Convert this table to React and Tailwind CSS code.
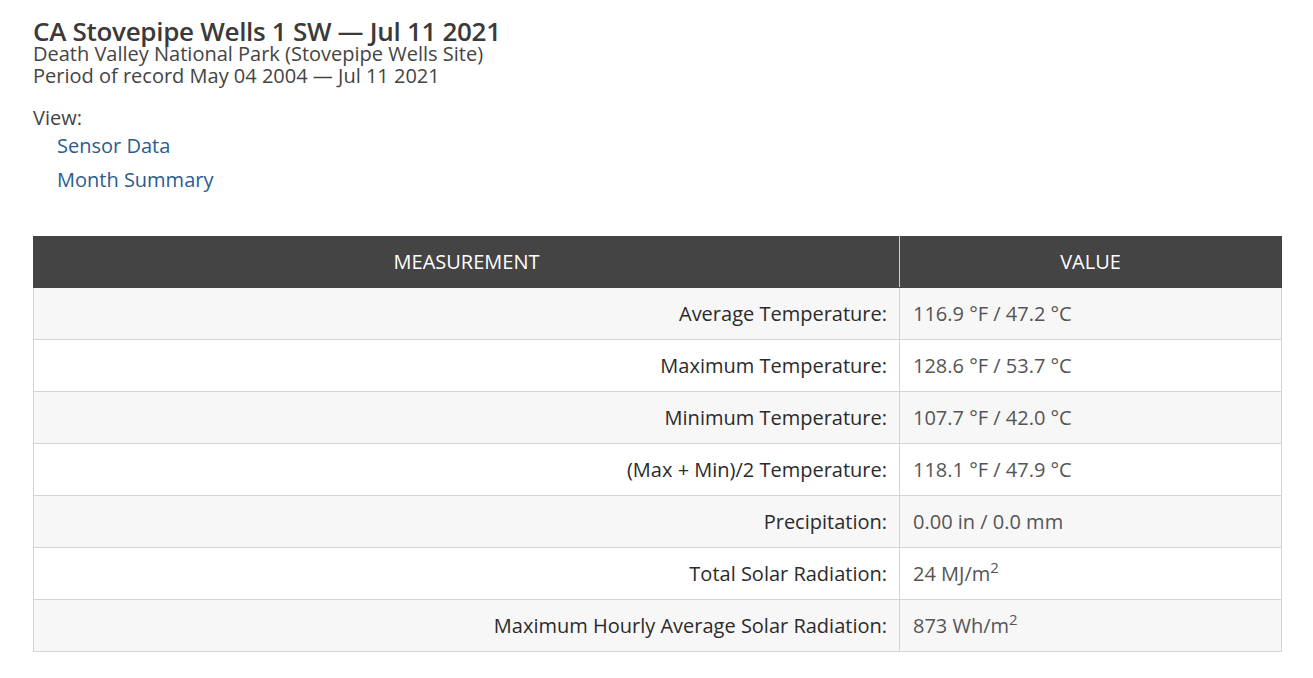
import React from 'react';

const rows = [
    { label: 'Average Temperature:', value: '116.9 °F / 47.2 °C' },
    { label: 'Maximum Temperature:', value: '128.6 °F / 53.7 °C' },
    { label: 'Minimum Temperature:', value: '107.7 °F / 42.0 °C' },
    { label: '(Max + Min)/2 Temperature:', value: '118.1 °F / 47.9 °C' },
    { label: 'Precipitation:', value: '0.00 in / 0.0 mm' },
    { label: 'Total Solar Radiation:', value: '24 MJ/m', sup: '2' },
    { label: 'Maximum Hourly Average Solar Radiation:', value: '873 Wh/m', sup: '2' },
];

function Row({ label, value, sup, odd }) {
    return (
        <tr className={odd ? 'bg-[#f7f7f7]' : 'bg-white'}>
            <td className="h-[52px] border border-[#d4d4d4] pr-3 text-right font-medium text-[20px] text-[#2b2b2b]">
                {label}
            </td>
            <td className="h-[52px] border border-[#d4d4d4] pl-[13px] text-[20px] text-[#555]">
                {value}
                {sup && <sup className="text-[15px] relative -top-[8px]">{sup}</sup>}
            </td>
        </tr>
    );
}

export default function App() {
    return (
        <div className="min-h-screen bg-white px-[33px] pt-[17px] font-['Open_Sans',sans-serif] text-[#333]">
            <h1 className="text-[26px] font-semibold leading-[28px] tracking-[-0.3px] text-[#3a3a3a]">
                CA Stovepipe Wells 1 SW — Jul 11 2021
            </h1>
            <p className="-mt-[2px] text-[20px] leading-[22px] text-[#444]">
                Death Valley National Park (Stovepipe Wells Site)
            </p>
            <p className="text-[20px] leading-[22px] text-[#444]">
                Period of record May 04 2004 — Jul 11 2021
            </p>

            <p className="mt-[19px] text-[20px] leading-[24px] text-[#444]">View:</p>
            <ul className="ml-6 mt-[4px] flex flex-col gap-[9px]">
                <li><a href="#" className="text-[20px] leading-[24px] text-[#2b5c8f]">Sensor Data</a></li>
                <li><a href="#" className="text-[20px] leading-[24px] text-[#2b5c8f]">Month Summary</a></li>
            </ul>

            <table className="mt-[43px] w-[1249px] border-collapse">
                <colgroup>
                    <col className="w-[866px]" />
                    <col />
                </colgroup>
                <thead>
                    <tr className="bg-[#444]">
                        <th className="h-[51px] border border-[#444] border-r-[#ccc] text-center text-[20px] font-normal text-white">
                            MEASUREMENT
                        </th>
                        <th className="h-[51px] border border-[#444] text-center text-[20px] font-normal text-white">
                            VALUE
                        </th>
                    </tr>
                </thead>
                <tbody>
                    {rows.map((r, i) => (
                        <Row key={r.label} {...r} odd={i % 2 === 0} />
                    ))}
                </tbody>
            </table>
        </div>
    );
}
